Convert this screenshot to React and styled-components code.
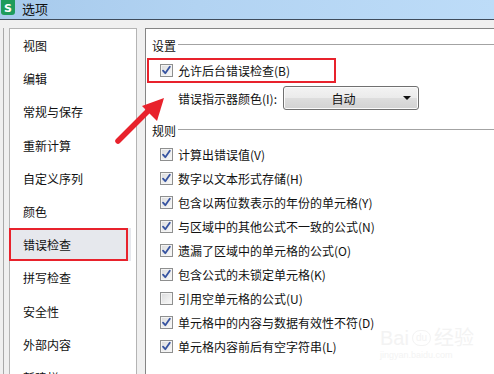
import React from 'react'
import styled, {createGlobalStyle} from 'styled-components'

const GlobalStyle = createGlobalStyle`
  html, body {
    margin: 0;
    padding: 0;
    background: #f0f0f0;
  }
  body {
    font-family: "Noto Sans CJK SC", "Noto Sans", sans-serif;
    font-size: 12px;
    color: #111;
  }
`

const menuItems = [
  '视图', '编辑', '常规与保存', '重新计算', '自定义序列', '颜色',
  '错误检查', '拼写检查', '安全性', '外部内容', '新建栏',
]

const rules = [
  {label: '计算出错误值(V)', checked: true},
  {label: '数字以文本形式存储(H)', checked: true},
  {label: '包含以两位数表示的年份的单元格(Y)', checked: true},
  {label: '与区域中的其他公式不一致的公式(N)', checked: true},
  {label: '遗漏了区域中的单元格的公式(O)', checked: true},
  {label: '包含公式的未锁定单元格(K)', checked: true},
  {label: '引用空单元格的公式(U)', checked: false},
  {label: '单元格中的内容与数据有效性不符(D)', checked: true},
  {label: '单元格内容前后有空字符串(L)', checked: true},
]

function Checkbox({checked}) {
  return (
    <Box>
      {checked && (
        <svg width="11" height="11" viewBox="0 0 11 11">
          <path d="M2 5.6 L4.3 8.2 L8.8 1.8" fill="none" stroke="#3653a0" strokeWidth="1.8" strokeLinecap="round" strokeLinejoin="round" />
        </svg>
      )}
    </Box>
  )
}

export default function App() {
  return (
    <>
      <GlobalStyle />
      <Window>
        <TitleBar>
          <Logo>S</Logo>
          <Title>选项</Title>
        </TitleBar>
        <Body>
          <Frame>
            <SideList>
              {menuItems.map((item, i) => (
                <SideItem key={item} $active={i === 6}>{item}</SideItem>
              ))}
            </SideList>
            <Content>
              <GroupHeader>
                <GroupTitle>设置</GroupTitle>
                <GroupLine />
              </GroupHeader>
              <CheckRow $highlight $first>
                <Checkbox checked />
                <span>允许后台错误检查(B)</span>
              </CheckRow>
              <ColorRow>
                <ColorLabel>错误指示器颜色(I):</ColorLabel>
                <Dropdown>
                  <DropText>自动</DropText>
                  <DropArrow />
                </Dropdown>
              </ColorRow>
              <GroupHeader $rules>
                <GroupTitle>规则</GroupTitle>
                <GroupLine />
              </GroupHeader>
              <RuleList>
                {rules.map(r => (
                  <CheckRow key={r.label}>
                    <Checkbox checked={r.checked} />
                    <span>{r.label}</span>
                  </CheckRow>
                ))}
              </RuleList>
            </Content>
          </Frame>
        </Body>
        <Arrow width="60" height="60" viewBox="0 0 60 60">
          <line x1="6" y1="51" x2="38" y2="19" stroke="#e8222c" strokeWidth="5.5" strokeLinecap="round" />
          <polygon points="52,8 30,16 45,31" fill="#e8222c" />
        </Arrow>
        <Watermark>
          <WmMain>Bai<Paw>du</Paw>经验</WmMain>
          <WmSub>jingyan.baidu.com</WmSub>
        </Watermark>
      </Window>
    </>
  )
}

const Window = styled.div`
  position: relative;
  width: 494px;
  height: 374px;
  overflow: hidden;
  background: #f0f0f0;
`

const TitleBar = styled.div`
  height: 19px;
  display: flex;
  align-items: center;
  background: linear-gradient(90deg, #a7caec 0%, #b2d3f2 40%, #bddcf8 100%);
  border-bottom: 1px solid #3f4c5c;
`

const Logo = styled.span`
  width: 14px;
  height: 15px;
  margin: -4px 0 0 1px;
  border-radius: 0 0 3px 3px;
  background: #1e9c5c;
  color: #fff;
  font-family: "DejaVu Sans", sans-serif;
  font-weight: bold;
  font-size: 11px;
  display: flex;
  align-items: center;
  justify-content: center;
  padding-top: 2px;
  box-sizing: border-box;
`

const Title = styled.span`
  margin: -3px 0 0 7px;
  font-size: 13px;
  color: #111;
`

const Body = styled.div`
  padding: 8px 0 0 3px;
`

const Frame = styled.div`
  display: flex;
  gap: 8px;
  border-left: 1px solid #a9a9a9;
  padding-left: 5px;
  height: 360px;
  align-items: flex-start;
`

const SideList = styled.div`
  width: 128px;
  height: 380px;
  background: #fff;
  border: 1px solid #b4b4b4;
  padding-right: 5px;
  box-sizing: border-box;
`

const SideItem = styled.div`
  position: relative;
  height: 33.2px;
  display: flex;
  align-items: center;
  padding-left: 13px;
  font-size: 12px;
  background: ${p => (p.$active ? '#e6e8ed' : 'transparent')};
  &::after {
    content: '';
    display: ${p => (p.$active ? 'block' : 'none')};
    position: absolute;
    top: 0;
    bottom: 0;
    left: -1px;
    width: 119px;
    border: 2px solid #e8222c;
    box-sizing: border-box;
  }
`

const Content = styled.div`
  flex: 1;
  height: 380px;
  background: #fff;
  border-top: 1px solid #858585;
  border-left: 1px solid #858585;
  padding: 8px 0 0 0;
  box-sizing: border-box;
`

const GroupHeader = styled.div`
  height: 16px;
  display: flex;
  align-items: center;
  padding-left: 6px;
  margin-top: ${p => (p.$rules ? '12px' : '0')};
`

const GroupTitle = styled.span`
  font-size: 12px;
`

const GroupLine = styled.div`
  flex: 1;
  height: 0;
  border-top: 1px solid #a3a3a3;
  border-bottom: 1px solid #fff;
  margin-left: 2px;
`

const CheckRow = styled.div`
  position: relative;
  height: 24px;
  display: flex;
  align-items: center;
  gap: 5px;
  padding-left: 14px;
  font-size: 12px;
  margin-top: ${p => (p.$first ? '5px' : '0')};
  &::after {
    content: '';
    display: ${p => (p.$highlight ? 'block' : 'none')};
    position: absolute;
    left: 1px;
    top: 0;
    width: 189px;
    height: 25px;
    border: 2px solid #e8222c;
    box-sizing: border-box;
  }
`

const Box = styled.span`
  width: 13px;
  height: 13px;
  box-sizing: border-box;
  border: 1px solid #8e8f8f;
  background: linear-gradient(135deg, #d9dadb 0%, #eeeeee 60%, #fafafa 100%);
  box-shadow: inset 0 0 0 1px #f4f4f4;
  display: flex;
  align-items: center;
  justify-content: center;
  flex-shrink: 0;
`

const ColorRow = styled.div`
  height: 24px;
  display: flex;
  align-items: center;
  margin-top: 4px;
  padding-left: 32px;
`

const ColorLabel = styled.span`
  width: 105px;
  font-size: 12px;
`

const Dropdown = styled.div`
  width: 136px;
  height: 24px;
  box-sizing: border-box;
  border: 1px solid #707070;
  border-radius: 3px;
  background: linear-gradient(180deg, #f3f3f3 0%, #ebebeb 48%, #dddddd 52%, #d2d2d2 100%);
  box-shadow: inset 0 0 0 1px #fbfbfb;
  display: flex;
  align-items: center;
  padding: 0 6px 0 0;
`

const DropText = styled.span`
  flex: 1;
  text-align: center;
  font-size: 12px;
`

const DropArrow = styled.span`
  width: 0;
  height: 0;
  border-left: 4px solid transparent;
  border-right: 4px solid transparent;
  border-top: 4px solid #111;
  margin-right: 1px;
`

const RuleList = styled.div`
  margin-top: 4px;
  display: flex;
  flex-direction: column;
`

const Arrow = styled.svg`
  position: absolute;
  left: 112px;
  top: 90px;
`

const Watermark = styled.div`
  position: absolute;
  left: 380px;
  top: 328px;
  color: #f3f3f3;
  font-family: "Liberation Sans", sans-serif;
  line-height: 1;
`

const WmMain = styled.div`
  font-size: 20px;
  display: flex;
  align-items: center;
  gap: 3px;
  font-family: "Liberation Sans", "Noto Sans CJK SC", sans-serif;
`

const Paw = styled.span`
  font-size: 10px;
  border: 1px solid #f3f3f3;
  border-radius: 8px;
  padding: 2px 3px;
`

const WmSub = styled.div`
  font-size: 9px;
  margin-top: 3px;
`
